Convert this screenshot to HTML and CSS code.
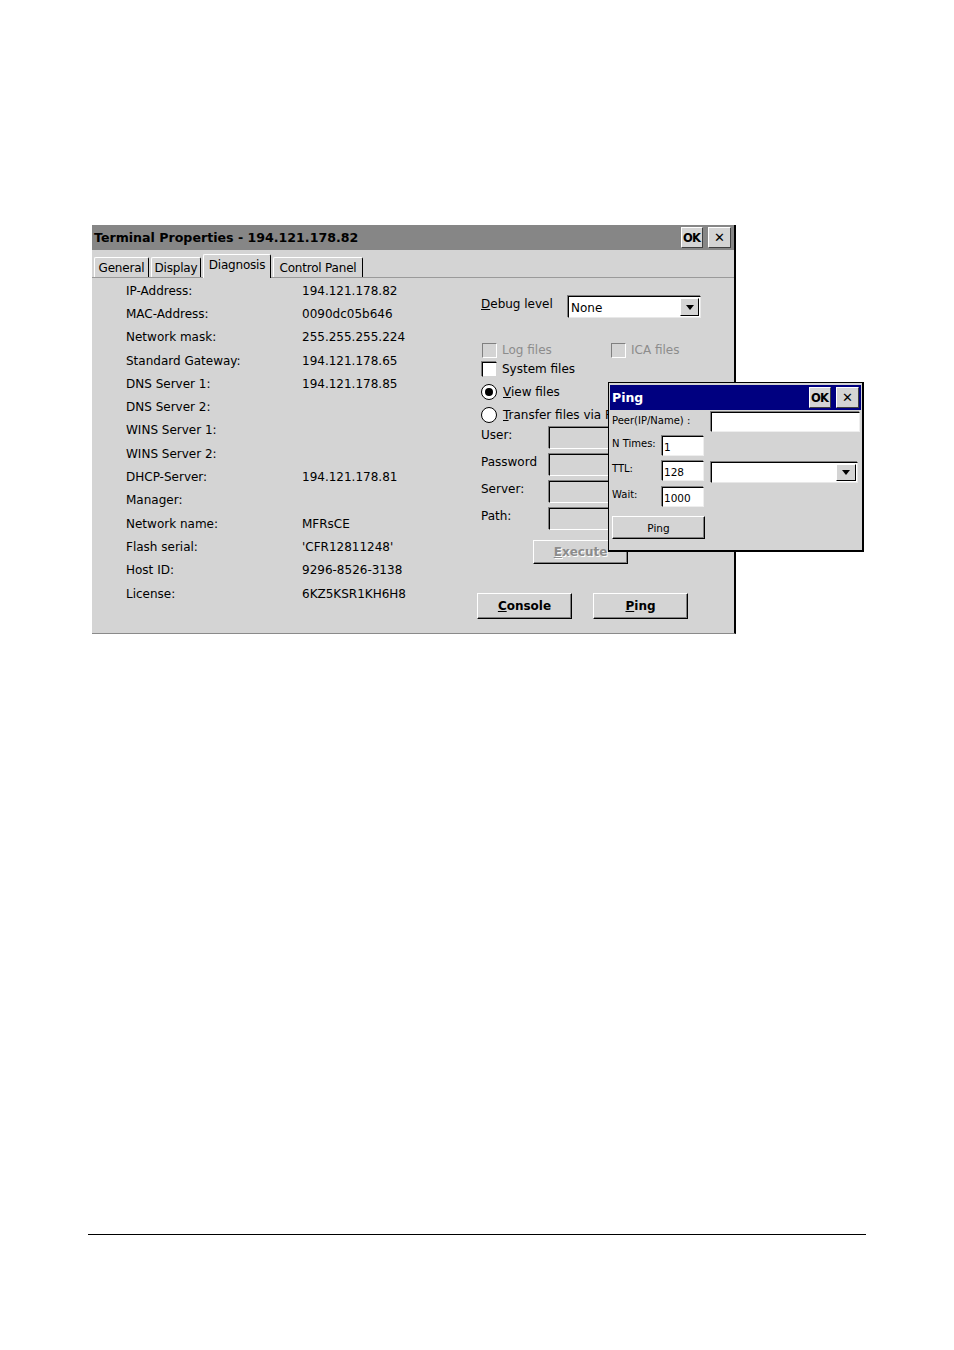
FILE: index.html
```html
<!DOCTYPE html>
<html>
<head>
<meta charset="utf-8">
<link rel="stylesheet" href="styles.css">
</head>
<body>
<div class="page">
  <div class="window">
    <div class="titlebar">
      <span class="title">Terminal Properties - 194.121.178.82</span>
      <div class="tbtns"><span class="tbtn ok">OK</span><span class="tbtn x">✕</span></div>
    </div>
    <div class="tabs">
      <span class="tab t1">General</span>
      <span class="tab t2">Display</span>
      <span class="tab t3 active">Diagnosis</span>
      <span class="tab t4">Control Panel</span>
    </div>
    <div class="content">
      <div class="info">
        <span>IP-Address:</span><span>194.121.178.82</span>
        <span>MAC-Address:</span><span>0090dc05b646</span>
        <span>Network mask:</span><span>255.255.255.224</span>
        <span>Standard Gateway:</span><span>194.121.178.65</span>
        <span>DNS Server 1:</span><span>194.121.178.85</span>
        <span>DNS Server 2:</span><span></span>
        <span>WINS Server 1:</span><span></span>
        <span>WINS Server 2:</span><span></span>
        <span>DHCP-Server:</span><span>194.121.178.81</span>
        <span>Manager:</span><span></span>
        <span>Network name:</span><span>MFRsCE</span>
        <span>Flash serial:</span><span>'CFR12811248'</span>
        <span>Host ID:</span><span>9296-8526-3138</span>
        <span>License:</span><span>6KZ5KSR1KH6H8</span>
      </div>
      <div class="right">
        <div class="debug">
          <span class="dlabel"><u>D</u>ebug level</span>
          <div class="combo"><span class="ctext">None</span><span class="cbtn"><span class="tri"></span></span></div>
        </div>
        <div class="checks">
          <div class="crow r1">
            <span class="opt disabled log"><span class="box"></span><span>Log files</span></span>
            <span class="opt disabled"><span class="box"></span><span>ICA files</span></span>
          </div>
          <div class="crow r2"><span class="opt"><span class="box on"></span><span>System files</span></span></div>
          <div class="crow r3"><span class="opt"><span class="radio sel"></span><span><u>V</u>iew files</span></span></div>
          <div class="crow r4"><span class="opt"><span class="radio"></span><span><u>T</u>ransfer files via F</span></span></div>
        </div>
        <div class="fields">
          <span class="flabel">User:</span><span class="field"></span>
          <span class="flabel">Password</span><span class="field"></span>
          <span class="flabel">Server:</span><span class="field"></span>
          <span class="flabel">Path:</span><span class="field"></span>
        </div>
        <div class="execrow"><span class="btn exec"><span><u>E</u>xecute</span></span></div>
        <div class="btnrow">
          <span class="btn big"><span><u>C</u>onsole</span></span>
          <span class="btn big"><span><u>P</u>ing</span></span>
        </div>
      </div>
    </div>
    <div class="dialog">
      <div class="dtitle">
        <span class="dname">Ping</span>
        <div class="tbtns"><span class="tbtn ok">OK</span><span class="tbtn x">✕</span></div>
      </div>
      <div class="dbody">
        <div class="dgrid">
          <span class="dl peer">Peer(IP/Name) :</span><span class="din wide"></span>
          <span class="dl">N Times:</span><span class="din small">1</span><span></span>
          <span class="dl">TTL:</span><span class="din small">128</span><span class="dcombo"><span class="cbtn"><span class="tri"></span></span></span>
          <span class="dl">Wait:</span><span class="din small">1000</span><span></span>
        </div>
        <span class="btn dping">Ping</span>
      </div>
    </div>
  </div>
  <div class="rule"></div>
</div>
</body>
</html>
```

FILE: styles.css
```css
* { box-sizing: border-box; }
body {
  margin: 0;
  background: #fff;
  font-family: "DejaVu Sans", Verdana, sans-serif;
  font-size: 12px;
  color: #000;
}
.page { padding-top: 225px; }
.window {
  position: relative;
  margin-left: 92px;
  width: 644px;
  background: #d4d4d4;
  border-right: 2px solid #000;
  border-bottom: 1px solid #8a8a8a;
}
.titlebar {
  height: 25px;
  background: #868686;
  display: flex;
  align-items: center;
  justify-content: space-between;
  padding: 0 3px 0 2px;
}
.title { font-weight: bold; font-size: 12.6px; }
.tbtns { display: flex; gap: 5px; }
.tbtn {
  height: 21px;
  background: #d4d4d4;
  border: 1px solid;
  border-color: #fff #404040 #404040 #fff;
  display: flex;
  align-items: center;
  justify-content: center;
  color: #000;
}
.tbtn.ok { width: 22px; font-weight: bold; font-size: 11.5px; letter-spacing: -0.8px; padding-right: 1px; }
.tbtn.x { width: 23px; font-size: 13px; }
.tabs {
  height: 28px;
  display: flex;
  align-items: flex-end;
  gap: 2px;
  padding-left: 2px;
  border-bottom: 1px solid #9a9a9a;
}
.tab {
  height: 20px;
  border-left: 1px solid #fff;
  border-top: 1px solid #fff;
  border-right: 1px solid #000;
  border-radius: 2px 2px 0 0;
  display: flex;
  align-items: center;
  justify-content: center;
  line-height: 1;
  letter-spacing: -0.2px;
  white-space: nowrap;
}
.t1 { width: 55px; }
.t2 { width: 50px; }
.t3 { width: 68px; }
.t4 { width: 90px; }
.tab.active {
  height: 24px;
  margin-bottom: -1px;
  padding-bottom: 4px;
  background: #d4d4d4;
}
.content {
  height: 355px;
  display: flex;
}
.info {
  width: 385px;
  display: grid;
  grid-template-columns: 176px auto;
  grid-auto-rows: 23.3px;
  align-items: center;
  padding: 1px 0 0 34px;
  align-content: start;
}
.right { flex: 1; position: relative; overflow: hidden; }
.debug {
  margin-top: 18px;
  height: 22px;
  display: flex;
  align-items: center;
  padding-left: 4px;
}
.dlabel { width: 87px; margin-top: -6px; }
.combo {
  width: 133px;
  height: 22px;
  background: #fff;
  border: 1px solid;
  border-color: #000 #e8e8e8 #e8e8e8 #000;
  box-shadow: -1px -1px 0 #808080;
  display: flex;
  align-items: center;
  justify-content: space-between;
  padding: 0 1px 0 2px;
}
.ctext { padding-top: 1px; }
.cbtn {
  width: 19px;
  height: 18px;
  background: #d4d4d4;
  border: 1px solid;
  border-color: #fff #000 #000 #fff;
  display: flex;
  align-items: center;
  justify-content: center;
}
.tri {
  width: 0; height: 0;
  border-left: 4px solid transparent;
  border-right: 4px solid transparent;
  border-top: 5px solid #000;
}
.checks { margin-top: 24px; padding-left: 4px; }
.crow { display: flex; align-items: center; height: 16px; }
.r1 { margin-bottom: 3px; }
.r2 { margin-bottom: 7px; }
.r3 { margin-bottom: 7px; }
.r4 { margin-bottom: 4px; }
.opt { display: flex; align-items: center; gap: 5px; white-space: nowrap; }
.opt.disabled { color: #8c8c8c; }
.opt.log { width: 129px; }
.box {
  width: 15px; height: 15px;
  border: 1px solid;
  border-color: #808080 #fff #fff #808080;
  margin-left: 1px;
  flex: none;
}
.box.on { background: #fff; border-color: #000 #d4d4d4 #d4d4d4 #000; box-shadow: -1px -1px 0 #808080; }
.radio {
  width: 16px; height: 16px;
  flex: none;
  border-radius: 50%;
  background: #fff;
  border: 1.5px solid #000;
  display: flex; align-items: center; justify-content: center;
  margin-right: 1px;
}
.radio.sel::after {
  content: "";
  width: 8px; height: 8px;
  border-radius: 50%;
  background: #000;
}
.fields {
  display: grid;
  grid-template-columns: 68px 150px;
  grid-auto-rows: 22px;
  row-gap: 5px;
  padding-left: 4px;
}
.flabel { margin-top: 1px; }
.field {
  border: 1px solid;
  border-color: #000 #fff #fff #000;
  box-shadow: -1px -1px 0 #808080;
}
.execrow { margin-top: 10px; padding-left: 56px; }
.btn {
  display: flex;
  align-items: center;
  justify-content: center;
  background: #d4d4d4;
  border: 1px solid;
  border-color: #fff #000 #000 #fff;
  box-shadow: inset -1px -1px 0 #808080;
}
.exec {
  width: 95px; height: 24px;
  font-weight: bold;
  color: #8c8c8c;
  text-shadow: 1px 1px 0 #fff;
}
.btnrow { margin-top: 29px; display: flex; gap: 21px; }
.big { width: 95px; height: 26px; font-weight: bold; }
.dialog {
  position: absolute;
  left: 516px;
  top: 157px;
  width: 256px;
  height: 170px;
  background: #d4d4d4;
  border-top: 1px solid #000;
  border-left: 1px solid #000;
  border-right: 2px solid #000;
  border-bottom: 2px solid #000;
  padding: 1px;
  font-size: 10px;
}
.dtitle {
  height: 25px;
  margin-top: 1px;
  background: #000080;
  display: flex;
  align-items: center;
  justify-content: space-between;
  padding: 0 2px 0 2px;
}
.dname { color: #fff; font-weight: bold; font-size: 12.5px; }
.dbody { padding: 2px 0 0 2px; }
.dgrid {
  display: grid;
  grid-template-columns: 50px 49px 149px;
  grid-template-rows: 24px 25px 26px 20px;
}
.dl { padding-top: 2px; align-self: start; white-space: nowrap; }
.dl.peer { grid-column: 1 / 3; padding-top: 3px; }
.din {
  height: 20px;
  background: #fff;
  border: 1px solid;
  border-color: #000 #eee #eee #000;
  box-shadow: -1px -1px 0 #808080;
  font-size: 10.5px;
  padding: 4px 0 0 1px;
  align-self: start;
}
.din.small { width: 42px; }
.din.wide { width: 149px; }
.dcombo {
  width: 147px;
  height: 21px;
  margin-top: 1px;
  background: #fff;
  border: 1px solid;
  border-color: #000 #e8e8e8 #e8e8e8 #000;
  box-shadow: -1px -1px 0 #808080;
  display: flex;
  justify-content: flex-end;
  align-items: center;
  padding-right: 1px;
}
.dcombo .cbtn { width: 20px; height: 17px; }
.dping {
  margin-top: 9px;
  width: 93px;
  height: 23px;
  font-size: 10.5px;
}
.rule {
  margin-top: 600px;
  margin-left: 88px;
  width: 778px;
  height: 1px;
  background: #000;
}
```
